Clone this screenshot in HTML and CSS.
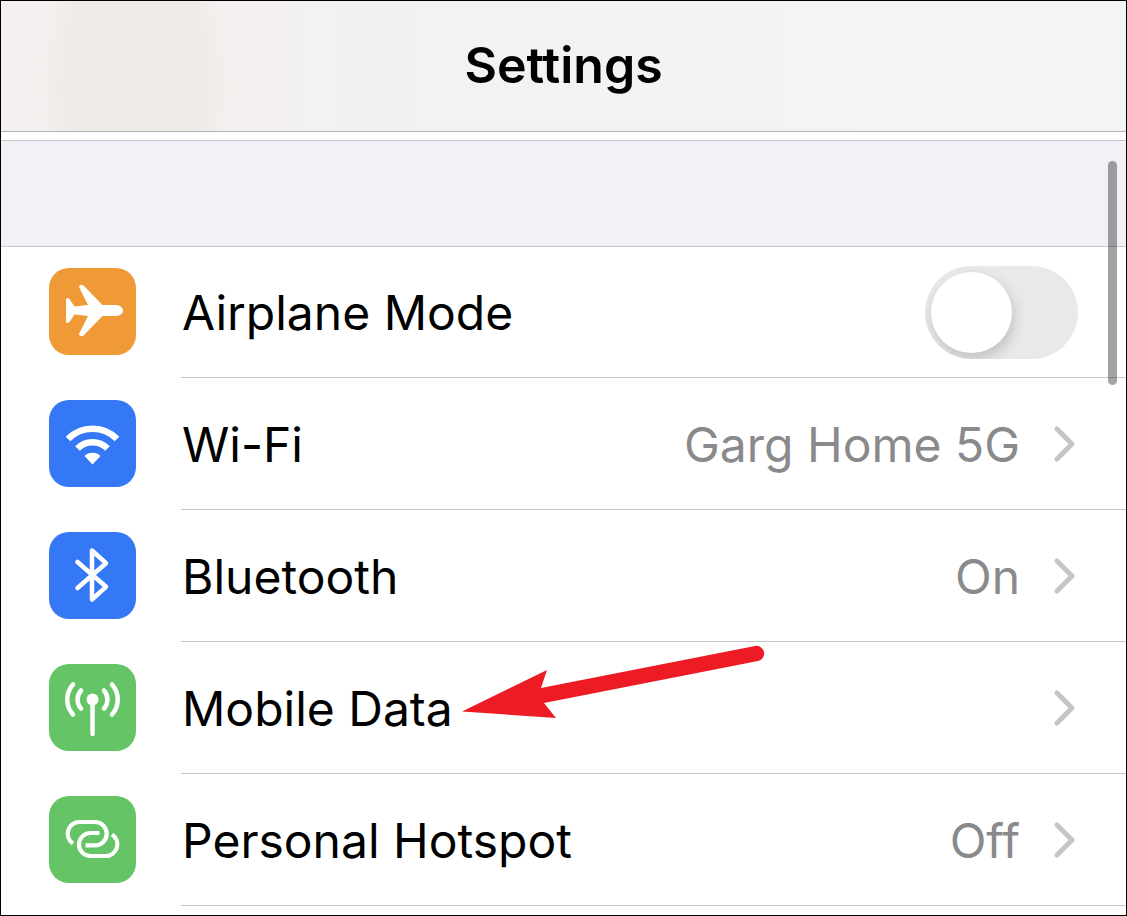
FILE: index.html
```
<!DOCTYPE html>
<html lang="en">
<head>
  <meta charset="UTF-8">
  <meta name="viewport" content="width=device-width, initial-scale=1">
  <title>Settings</title>
  <link rel="stylesheet" href="styles.css">
</head>
<body>
  <div class="screen">

    <!-- Title bar -->
    <header class="top-bar">
      <h1>Settings</h1>
    </header>

    <div class="section-gap"></div>

    <!-- Settings list -->
    <main class="list">
      <div class="row">
        <svg class="icon orange" viewBox="0 0 87 87" aria-hidden="true">
          <path fill="#fff" d="M30 19Q30 17 32 17H33Q34.500 17 35.500 18.500L53.500 37H67C71 37 74 39.500 74 42.500S71 48 67 48H53.500L35.500 66.500Q34.500 68 33 68H32Q30 68 30 66L39 48L25.500 46.500L20.500 54Q19.500 55 18 55Q17 55 17 53V32Q17 30 18 30Q19.500 30 20.500 31L25.500 38.500L39 37Z"/>
        </svg>
        <div class="row-body">
          <label class="name" for="airplane">Airplane Mode</label>
          <input class="toggle" type="checkbox" id="airplane">
        </div>
      </div>

      <a class="row" href="#wifi">
        <svg class="icon blue" viewBox="0 0 87 87" aria-hidden="true">
          <g fill="none" stroke="#fff" stroke-width="6.500">
            <path d="M19 39A34.500 34.500 0 0 1 68 39"/>
            <path d="M28.500 48.500A21 21 0 0 1 58.500 48.500"/>
          </g>
          <path fill="#fff" d="M35.500 56A11.500 11.500 0 0 1 51.500 56L43.500 64.500Z"/>
        </svg>
        <div class="row-body">
          <span class="name">Wi-Fi</span>
          <span class="value">Garg Home 5G</span>
          <svg class="chevron" viewBox="0 0 24 40" aria-hidden="true"><path d="M3 5L18 20L3 35"/></svg>
        </div>
      </a>

      <a class="row" href="#bluetooth">
        <svg class="icon blue" viewBox="0 0 87 87" aria-hidden="true">
          <path fill="none" stroke="#fff" stroke-width="4.500" stroke-linecap="round" stroke-linejoin="round" d="M28.500 30L57 54.800L43 67.500V18.500L57 31.200L28.500 56"/>
        </svg>
        <div class="row-body">
          <span class="name">Bluetooth</span>
          <span class="value">On</span>
          <svg class="chevron" viewBox="0 0 24 40" aria-hidden="true"><path d="M3 5L18 20L3 35"/></svg>
        </div>
      </a>

      <a class="row" href="#mobile-data">
        <svg class="icon green" viewBox="0 0 87 87" aria-hidden="true">
          <circle cx="43.500" cy="35.500" r="6" fill="#fff"/>
          <g fill="none" stroke="#fff" stroke-width="4.500" stroke-linecap="round">
            <path d="M43.500 36V70"/>
            <path d="M24 20.500A22.500 22.500 0 0 0 24 50.500"/>
            <path d="M32 26.500A13.500 13.500 0 0 0 32 44.500"/>
            <path d="M63 20.500A22.500 22.500 0 0 1 63 50.500"/>
            <path d="M55 26.500A13.500 13.500 0 0 1 55 44.500"/>
          </g>
        </svg>
        <div class="row-body">
          <span class="name">Mobile Data</span>
          <svg class="chevron" viewBox="0 0 24 40" aria-hidden="true"><path d="M3 5L18 20L3 35"/></svg>
          <!-- Red arrow pointing at the label -->
          <svg class="arrow" viewBox="0 0 304 76" aria-hidden="true">
            <path fill="#ed1c24" d="M0 67.500L85 26L79 44L293 2A7.500 7.500 0 0 1 296 17L82 59L94 74Z"/>
          </svg>
        </div>
      </a>

      <a class="row" href="#hotspot">
        <svg class="icon green" viewBox="0 0 87 87" aria-hidden="true">
          <g fill="none" stroke="#fff" stroke-width="4.200">
            <path d="M24 47.500A11.700 11.700 0 0 1 31 26H46A11.700 11.700 0 0 1 46 49.400H36.500"/>
            <path d="M50.500 37H41.500A11.500 11.500 0 0 0 41.500 60H56.500A11.700 11.700 0 0 0 63 38.500"/>
          </g>
        </svg>
        <div class="row-body">
          <span class="name">Personal Hotspot</span>
          <span class="value">Off</span>
          <svg class="chevron" viewBox="0 0 24 40" aria-hidden="true"><path d="M3 5L18 20L3 35"/></svg>
        </div>
      </a>
    </main>

    <div class="scroll-thumb"></div>
  </div>
</body>
</html>
```
FILE: styles.css
```
* {
  box-sizing: border-box;
}

body {
  margin: 0;
  background-color: white;
  color: black;
  font-family: Inter, "Liberation Sans", sans-serif;
}

.screen {
  position: relative;
  min-height: 100vh;
  border: 1px solid black;
}

.top-bar {
  display: flex;
  align-items: center;
  justify-content: center;
  height: 131px;
  padding-bottom: 2px;
  border-bottom: 1px solid #b2b2b2;
  background:
    radial-gradient(ellipse 96px 170px at 134px 85px, #eeeae6 68%, transparent),
    linear-gradient(90deg, #f4f0ef 22%, #f2f1f2 32%, #f3f3f4 55%, #f3f5f4);
}

h1 {
  margin: 0;
  font-size: 50px;
  line-height: 60px;
  font-weight: 600;
}

/* Grey band above the list */
.section-gap {
  height: 106px;
  margin-top: 8px;
  border-top: 1px solid #c6c6c8;
  background-color: #f2f1f7;
}

.list {
  border-top: 1px solid #c6c6c8;
}

.row {
  display: flex;
  align-items: center;
  gap: 45px;
  padding-left: 48px;
  color: inherit;
  text-decoration: none;
}

.icon {
  flex: none;
  width: 87px;
  height: 87px;
  margin-bottom: 2px;
  border-radius: 20px;
}

.orange {
  background-color: #f09a37;
}

.blue {
  background-color: #3478f6;
}

.green {
  background-color: #65c466;
}

.row-body {
  position: relative;
  display: flex;
  flex: 1;
  align-items: center;
  gap: 34px;
  height: 132px;
  padding-right: 48px;
  border-bottom: 1px solid #c6c6c8;
  font-size: 48px;
  line-height: 60px;
}

.row:first-child .row-body {
  height: 131px;
}

.name,
.value {
  padding-top: 2px;
}

.name {
  flex: 1;
  padding-left: 1px;
}

.value {
  color: #8a8a8d;
}

.chevron {
  flex: none;
  width: 24px;
  height: 40px;
  fill: none;
  stroke: #c5c5c7;
  stroke-width: 5;
  stroke-linecap: round;
  stroke-linejoin: round;
}

/* Switch */
.toggle {
  appearance: none;
  flex: none;
  width: 153px;
  height: 93px;
  margin: 0;
  padding: 6px;
  border-radius: 47px;
  background-color: #ebe8e8;
  overflow: hidden;
  cursor: pointer;
}

.toggle::before {
  content: "";
  display: block;
  width: 81px;
  height: 81px;
  border-radius: 50%;
  background-color: white;
  box-shadow: 2px 6px 14px rgba(0, 0, 0, 0.18);
}

.toggle:checked {
  background-color: #65c466;
}

.toggle:checked::before {
  margin-left: 60px;
}

.arrow {
  position: absolute;
  top: 2px;
  left: 281px;
  width: 304px;
  height: 76px;
}

.scroll-thumb {
  position: absolute;
  top: 160px;
  right: 9px;
  width: 9px;
  height: 224px;
  border-radius: 5px;
  background-color: rgba(0, 0, 0, 0.36);
}
```
